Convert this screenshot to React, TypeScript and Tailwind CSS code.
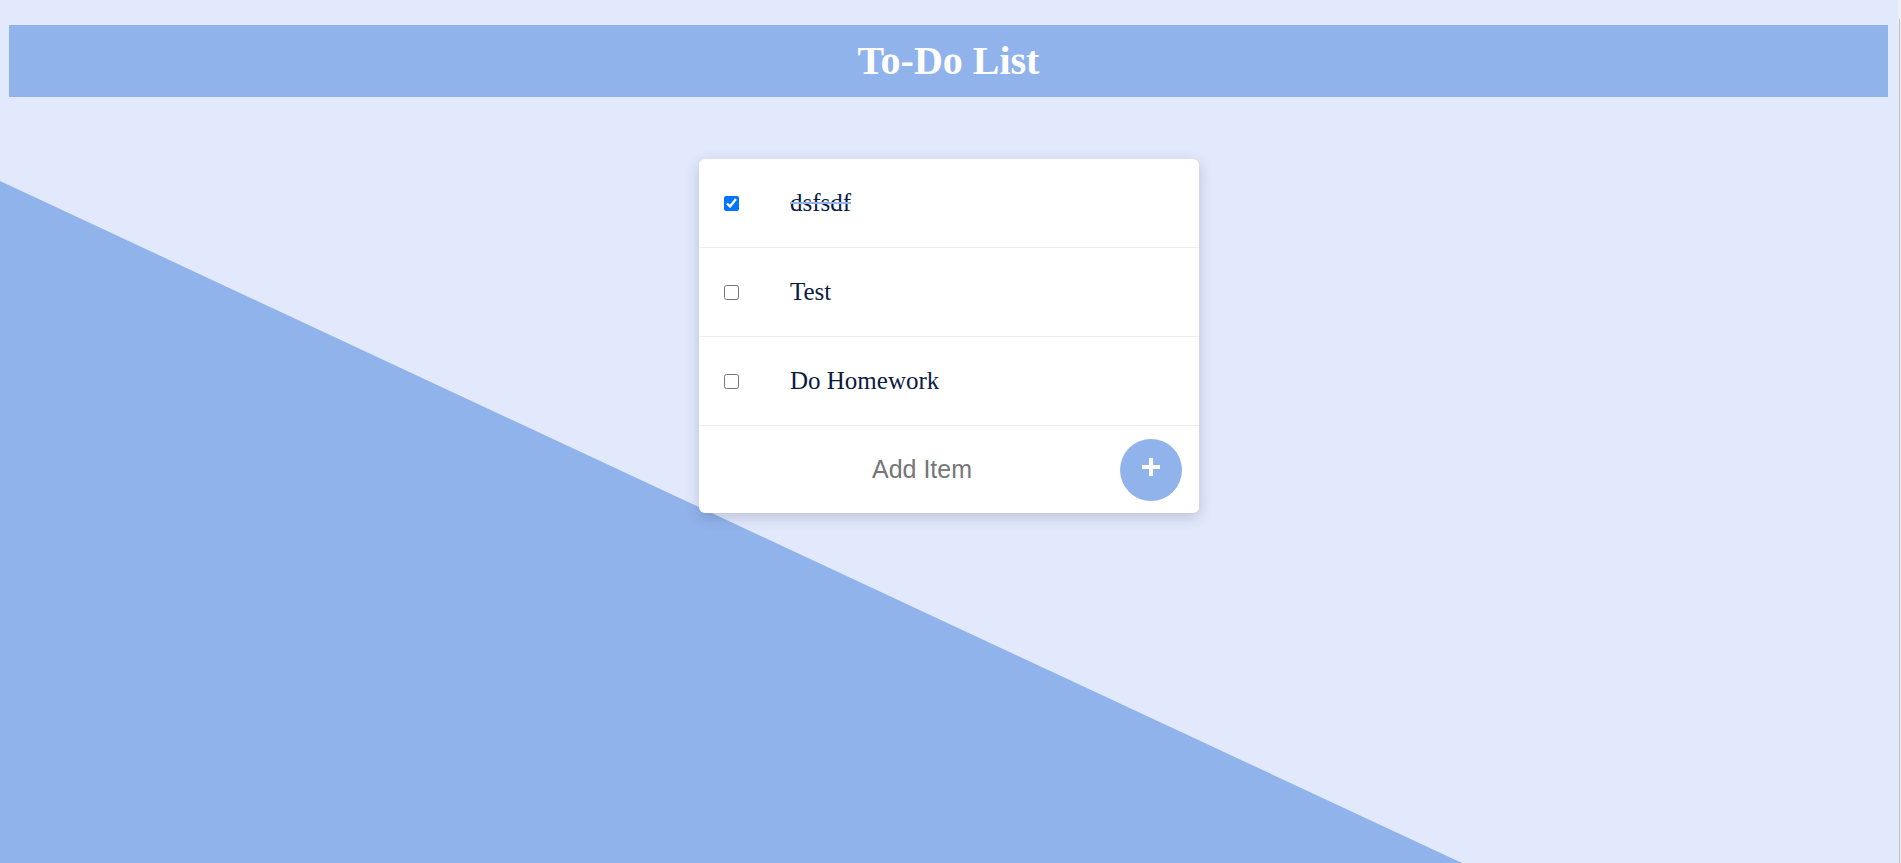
import React, { useState } from 'react';

interface Todo {
  id: number;
  text: string;
  done: boolean;
}

const App: React.FC = () => {
  const [todos, setTodos] = useState<Todo[]>([
    { id: 1, text: 'dsfsdf', done: true },
    { id: 2, text: 'Test', done: false },
    { id: 3, text: 'Do Homework', done: false }
  ]);
  const [draft, setDraft] = useState('');

  const toggle = (id: number) =>
    setTodos(todos.map((t) => (t.id === id ? { ...t, done: !t.done } : t)));

  const addItem = () => {
    if (!draft.trim()) return;
    setTodos([...todos, { id: Date.now(), text: draft.trim(), done: false }]);
    setDraft('');
  };

  return (
    <div className="flex h-[863px] w-full overflow-hidden bg-[#e3e9fc]">
      <div className="relative flex-1 flex flex-col">
        {/* background wedge */}
        <svg className="absolute inset-0 w-full h-full" viewBox="0 0 1898 863" preserveAspectRatio="none">
          <polygon points="0,181 1462,863 0,863" fill="#91b3eb" />
        </svg>

        {/* Header */}
        <div className="relative mt-[25px] ml-[9px] mr-[10px] h-[72px] bg-[#91b3eb] flex items-center justify-center">
          <h1 className="text-white font-bold text-[40px] leading-none [font-family:'Liberation_Serif',serif]">
            To-Do List
          </h1>
        </div>

        {/* Card */}
        <div className="relative mx-auto mt-[62px] w-[500px] bg-white rounded-md shadow-[0_4px_14px_rgba(40,50,90,0.22)]">
          {todos.map((todo) => (
            <div key={todo.id} className="h-[89px] flex items-center border-b border-[#eeeeee] pl-[25px]">
              <input
                type="checkbox"
                checked={todo.done}
                onChange={() => toggle(todo.id)}
                className="w-[15px] h-[15px] m-0 accent-[#0075ff]"
              />
              <span
                className={`ml-[51px] text-[25px] text-[#0b1b3f] [font-family:'Liberation_Serif',serif] ${
                  todo.done ? 'line-through decoration-[#91b3eb]' : ''
                }`}
              >
                {todo.text}
              </span>
            </div>
          ))}

          {/* Add row */}
          <div className="h-[87px] flex items-center pl-[25px] pr-[17px]">
            <input
              type="text"
              placeholder="Add Item"
              value={draft}
              onChange={(e) => setDraft(e.target.value)}
              className="flex-1 bg-transparent text-center text-[25px] text-[#333] placeholder-[#767676] outline-none [font-family:'Liberation_Sans',Arial,sans-serif]"
            />
            <button
              type="button"
              onClick={addItem}
              className="w-[62px] h-[62px] rounded-full bg-[#91b3eb] flex items-center justify-center"
            >
              <svg className="w-[18px] h-[18px] mb-[6px]" viewBox="0 0 18 18">
                <rect x="7" y="0" width="4" height="18" fill="#fff" />
                <rect x="0" y="7" width="18" height="4" fill="#fff" />
              </svg>
            </button>
          </div>
        </div>
      </div>

      {/* scrollbar edge */}
      <div className="w-[3px] bg-[#f0f0f0] flex flex-col">
        <div className="mt-[19px] ml-[1px] w-[1px] flex-1 bg-[#bdbdbd]" />
      </div>
    </div>
  );
};

export default App;
